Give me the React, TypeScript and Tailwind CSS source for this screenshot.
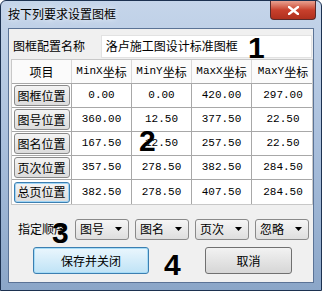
import React from 'react';

const rows = [
  { name: '图框位置', v: ['0.00', '0.00', '420.00', '297.00'] },
  { name: '图号位置', v: ['360.00', '12.50', '377.50', '22.50'] },
  { name: '图名位置', v: ['167.50', '12.50', '257.50', '22.50'] },
  { name: '页次位置', v: ['357.50', '278.50', '382.50', '284.50'] },
  { name: '总页位置', v: ['382.50', '278.50', '407.50', '284.50'] },
];

const headers = ['MinX', 'MinY', 'MaxX', 'MaxY'];
const combos = ['图号', '图名', '页次', '忽略'];

const cjk = "font-['SimSun','Noto_Sans_CJK_SC',sans-serif]";
const mono = "font-['Liberation_Mono','Noto_Sans_CJK_SC',monospace]";

const Combo: React.FC<{ label: string }> = ({ label }) => (
  <div className="w-[54px] h-[21px] flex items-center justify-between pl-[4px] pr-[6px] rounded-[3px] border border-[#8a8a8a] bg-gradient-to-b from-[#f6f6f6] to-[#dedede] text-[12px]">
    <span>{label}</span>
    <svg width="7" height="4" viewBox="0 0 7 4"><path d="M0 0h7L3.5 4z" fill="#000" /></svg>
  </div>
);

export default function App() {
  return (
    <div className={`relative w-[322px] h-[291px] flex flex-col border border-[#1c3150] rounded-t-[6px] bg-gradient-to-b from-[#c5d5ea] via-[#a9bfdc] to-[#8ba6c8] text-black ${cjk}`}>
      {/* title bar */}
      <div className="h-[27px] flex items-start justify-between">
        <span className="pl-[7px] pt-[6px] text-[12px] leading-[14px] [text-shadow:0_0_6px_#fff]">按下列要求设置图框</span>
        <div className="mr-[5px] w-[46px] h-[19px] flex items-center justify-center rounded-b-[4px] border border-[#5a2a2a] border-t-0 bg-gradient-to-b from-[#e8a090] via-[#c8402c] to-[#b0301e]">
          <svg width="11" height="9" viewBox="0 0 11 9"><path d="M1 1l9 7M10 1L1 8" stroke="#fff" strokeWidth="2.4" strokeLinecap="square" /></svg>
        </div>
      </div>

      {/* client area */}
      <div className="mx-[7px] mb-[7px] flex-1 border border-[#5b7396] bg-[#f0f0f0] px-[1px] pt-[5px] flex flex-col">
        <div className="flex items-center h-[24px]">
          <span className="pl-[3px] w-[91px] text-[12px]">图框配置名称</span>
          <div className="w-[212px] h-[23px] flex items-center pl-[4px] bg-white border border-[#e2e2e2] text-[12px]">洛卢施工图设计标准图框</div>
        </div>

        <div className="mt-[1px] ml-[1px] w-[302px] border border-[#c8c8c8] bg-white">
          <div className="grid grid-cols-[60px_60px_60px_60px_62px] h-[24px] bg-[#fbfbfb] border-b border-[#a8a8a8]">
            <div className="flex items-center justify-center text-[12px] border-r border-[#d8d8d8]">项目</div>
            {headers.map((h, i) => (
              <div key={h} className={`flex items-center justify-center text-[12px] ${i < 3 ? 'border-r border-[#d8d8d8]' : ''}`}>
                <span className={`text-[11px] ${mono}`}>{h}</span>坐标
              </div>
            ))}
          </div>
          {rows.map((r, ri) => (
            <div key={r.name} className={`grid grid-cols-[60px_60px_60px_60px_62px] h-[24px] ${ri < 4 ? 'border-b border-[#a8a8a8]' : ''}`}>
              <div className="flex items-center justify-center border-r border-[#a8a8a8]">
                <div className={`w-[56px] h-[21px] flex items-center justify-center rounded-[3px] border text-[12px] bg-gradient-to-b from-[#f4f4f4] to-[#dcdcdc] ${ri === 4 ? 'border-[#3c7fb1] shadow-[inset_0_0_0_1px_#9fd4f5]' : 'border-[#8a8a8a]'}`}>{r.name}</div>
              </div>
              {r.v.map((v, i) => (
                <div key={i} className={`flex items-center justify-center text-[11px] ${mono} ${i < 3 ? 'border-r border-[#a8a8a8]' : ''}`}>{v}</div>
              ))}
            </div>
          ))}
        </div>

        <div className="mt-[13px] flex items-center h-[22px]">
          <span className="pl-[8px] w-[65px] text-[12px]">指定顺序</span>
          <div className="flex gap-[6px]">
            {combos.map(c => <Combo key={c} label={c} />)}
          </div>
        </div>

        <div className="mt-[7px] flex">
          <div className="ml-[23px] w-[116px] h-[27px] flex items-center justify-center rounded-[3px] border border-[#3c7fb1] shadow-[inset_0_0_0_1px_#a6dcf7] bg-gradient-to-b from-[#eaf6fd] to-[#bfe3f6] text-[12px]">保存并关闭</div>
          <div className="ml-[56px] w-[87px] h-[27px] flex items-center justify-center rounded-[3px] border border-[#707070] bg-gradient-to-b from-[#f2f2f2] to-[#d6d6d6] text-[12px]">取消</div>
        </div>
      </div>

      {/* annotations */}
      <span className="absolute left-[247px] top-[32px] text-[30px] font-bold leading-none font-['Liberation_Sans',sans-serif]">1</span>
      <span className="absolute left-[138px] top-[125px] text-[30px] font-bold leading-none font-['Liberation_Sans',sans-serif]">2</span>
      <span className="absolute left-[51px] top-[217px] text-[30px] font-bold leading-none font-['Liberation_Sans',sans-serif]">3</span>
      <span className="absolute left-[163px] top-[249px] text-[30px] font-bold leading-none font-['Liberation_Sans',sans-serif]">4</span>
    </div>
  );
}
